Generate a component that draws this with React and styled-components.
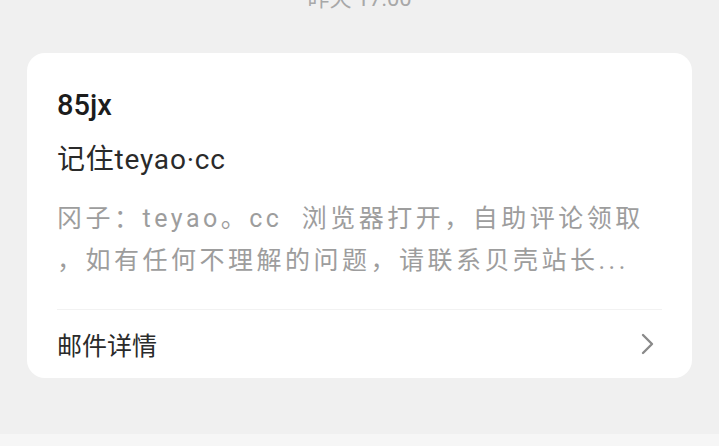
import React from 'react';
import styled, { createGlobalStyle } from 'styled-components';

const GlobalStyle = createGlobalStyle`
  html, body {
    margin: 0;
    padding: 0;
    background: #f0f0f0;
  }
  body {
    font-family: Roboto, "Noto Sans CJK SC", sans-serif;
    overflow: hidden;
  }
`;

const Page = styled.div`
  width: 719px;
  height: 446px;
  display: flex;
  flex-direction: column;
  background: #f0f0f0;
  overflow: hidden;
`;

const Time = styled.div`
  margin-top: -16px;
  height: 30px;
  line-height: 30px;
  text-align: center;
  font-size: 22px;
  color: #a8a8a8;
`;

const Card = styled.div`
  margin: 39px 27px 0;
  background: #fff;
  border-radius: 18px;
  padding: 25px 30px 0;
  display: flex;
  flex-direction: column;
`;

const Title = styled.div`
  font-size: 29px;
  font-weight: 500;
  line-height: 54px;
  color: #1c1c1c;
`;

const Subject = styled.div`
  font-size: 28px;
  line-height: 40px;
  margin-top: 8px;
  color: #2a2a2a;
  letter-spacing: 0.8px;
`;

const Body = styled.div`
  margin-top: 18px;
  font-size: 25px;
  line-height: 42px;
  color: #9d9d9d;
  letter-spacing: 3.5px;
`;

const Line = styled.div`
  white-space: pre;
  overflow: hidden;
`;

const Divider = styled.div`
  margin-top: 27px;
  height: 1px;
  background: #f2f2f2;
`;

const Footer = styled.div`
  height: 68px;
  display: flex;
  align-items: center;
  justify-content: space-between;
  font-size: 25px;
  color: #2a2a2a;
`;

const Chevron = () => (
  <svg width="16" height="22" viewBox="0 0 16 22" style={{ marginRight: 6 }}>
    <path d="M3 2 L12 11 L3 20" fill="none" stroke="#8a8a8a" strokeWidth="2.4" strokeLinecap="round" strokeLinejoin="round" />
  </svg>
);

const BottomBar = styled.div`
  margin-top: auto;
  height: 12px;
  background: #f6f6f6;
`;

export default function App() {
  return (
    <Page>
      <GlobalStyle />
      <Time>昨天 17:00</Time>
      <Card>
        <Title>85jx</Title>
        <Subject>记住teyao·cc</Subject>
        <Body>
          <Line>冈子：teyao。cc  浏览器打开，自助评论领取</Line>
          <Line>，如有任何不理解的问题，请联系贝壳站长...</Line>
        </Body>
        <Divider />
        <Footer>
          <span>邮件详情</span>
          <Chevron />
        </Footer>
      </Card>
      <BottomBar />
    </Page>
  );
}
